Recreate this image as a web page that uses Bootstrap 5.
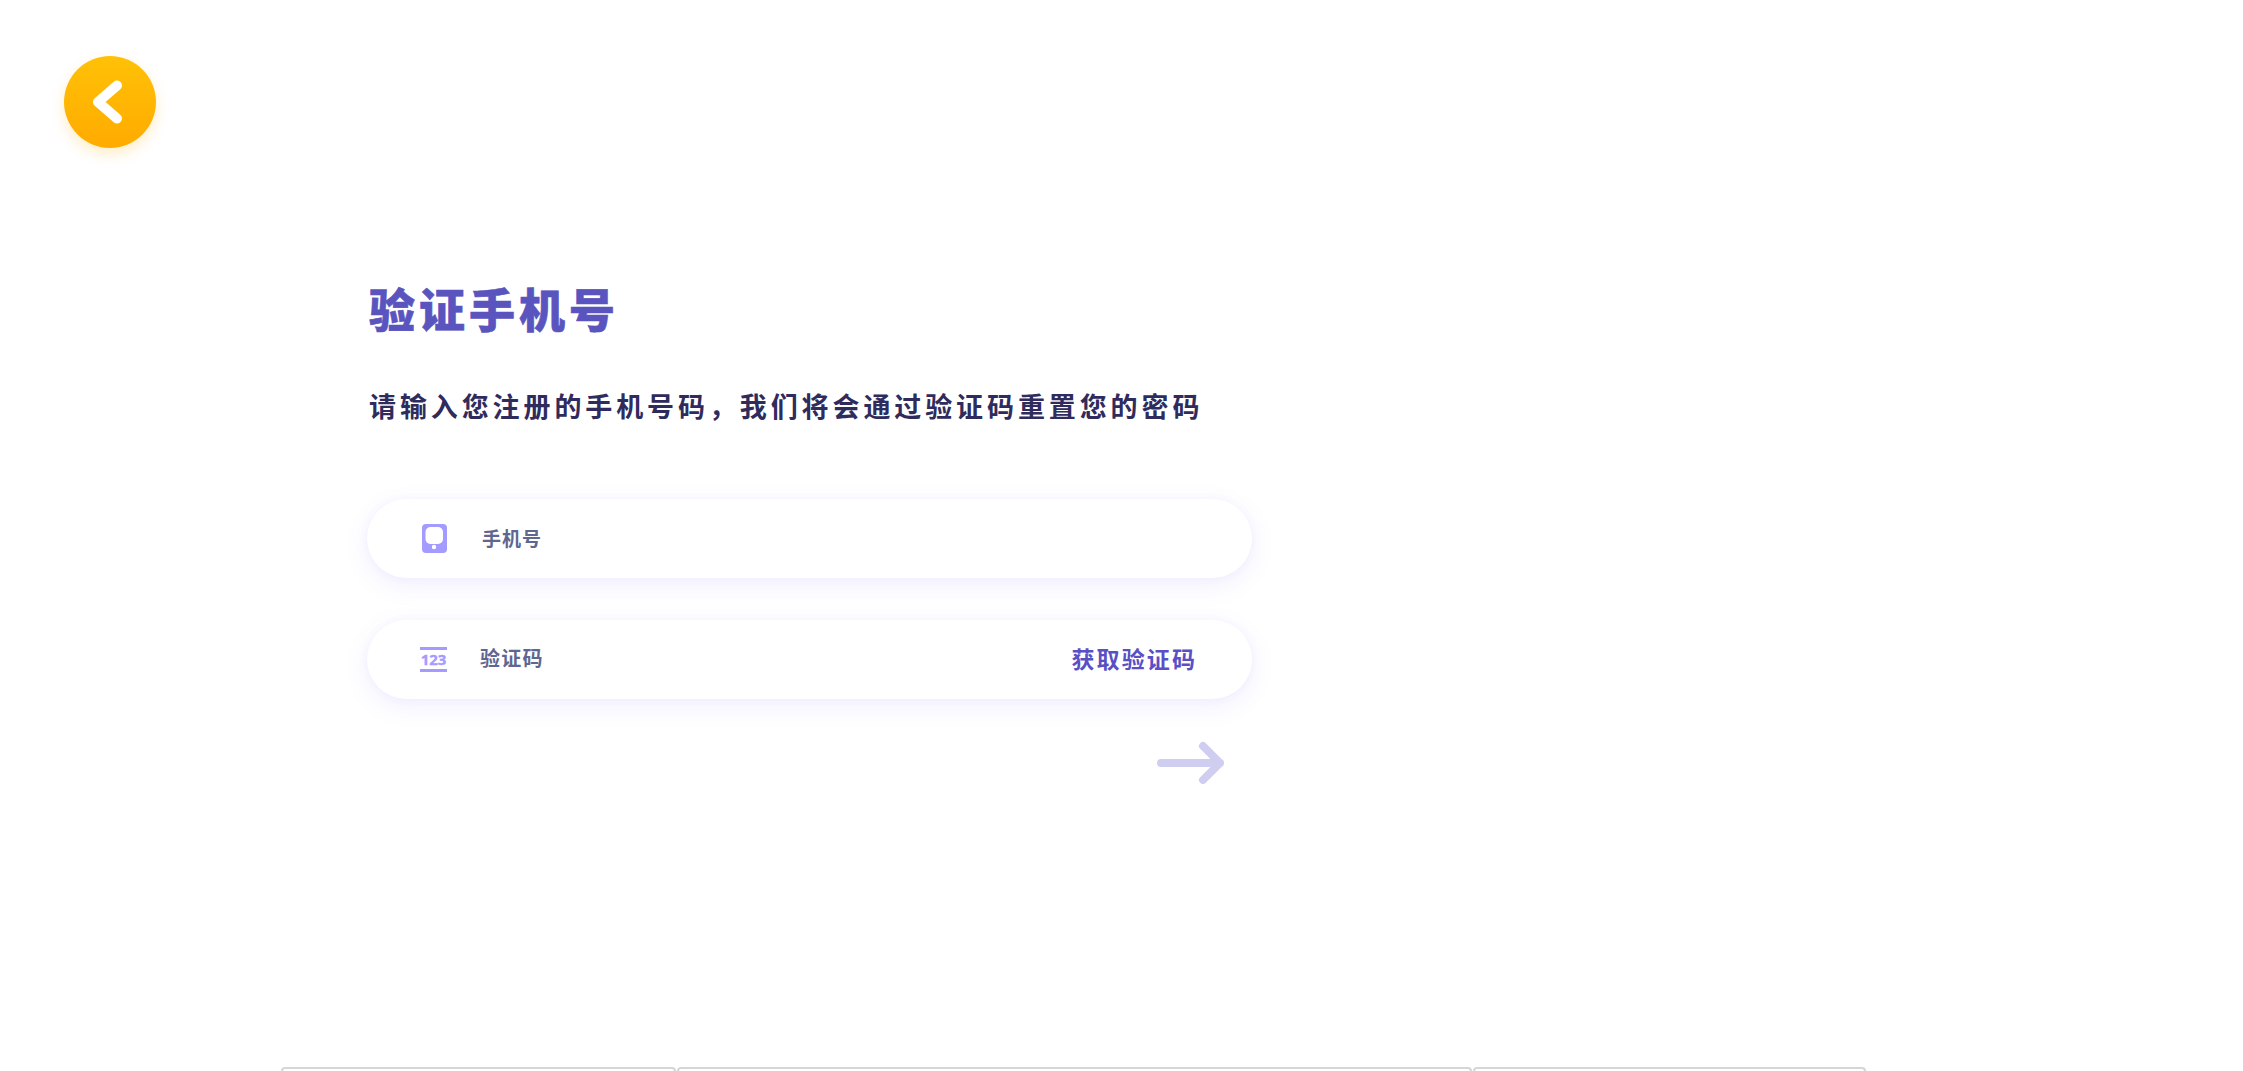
<!DOCTYPE html>
<html lang="zh">
<head>
<meta charset="utf-8">
<title>验证手机号</title>
<link href="https://cdn.jsdelivr.net/npm/bootstrap@5.3.0/dist/css/bootstrap.min.css" rel="stylesheet">
<style>
html,body{height:100%;overflow:hidden;background:#fff}
body{font-family:"Noto Sans CJK SC",sans-serif}
.vp-page{height:1071px;display:flex;flex-direction:column;padding:56px 0 0 64px}
.vp-back{width:92px;height:92px;border-radius:50%;border:0;padding:0;background:linear-gradient(180deg,#ffc107,#ffab00);box-shadow:0 6px 14px rgba(255,171,0,.22)}
.vp-main{width:885px;margin:127px 0 0 303px;flex:1 1 auto}
.vp-title{font-size:46px;font-weight:900;line-height:64px;color:#5a54bf;margin:0;padding-left:2px;letter-spacing:4px;-webkit-text-stroke:.6px #5a54bf}
.vp-sub{font-size:27px;font-weight:700;color:#2f2c5d;line-height:40px;margin:47px 0 0;padding-left:2px;letter-spacing:3.9px;white-space:nowrap}
.vp-field{height:78.500px;border-radius:40px;background:#fff;box-shadow:0 7px 24px rgba(108,99,255,.10),0 0 8px rgba(108,99,255,.05);padding:0 55px 0 52px}
.vp-field1{margin-top:73px}
.vp-field2{margin-top:42.500px}
.vp-icon{width:30px;flex:0 0 30px;display:block}
.vp-label{font-size:19px;font-weight:700;color:#5f6690;letter-spacing:1px;line-height:1;padding-bottom:2px}
.vp-label1{margin-left:33px}
.vp-label2{margin-left:31px;font-size:20px;letter-spacing:1.300px}
.vp-code{font-size:23px;font-weight:700;color:#5a4fc4;letter-spacing:2.100px;text-decoration:none;line-height:1;padding-bottom:2px}
.vp-next{margin:42px 28px 0 0;border:0;background:none;padding:0}
.vp-tabs{height:4px;margin-left:217px;display:flex;gap:1px}
.vp-tab{height:4px;border:2px solid #d6d6d6;border-bottom:0;border-radius:4px 4px 0 0;background:#fff}
.vp-tab-a{width:395px}
.vp-tab-b{width:795px}
.vp-tab-c{width:393px}
.vp-digits{stroke:#a39bff;stroke-width:.35px}
</style>
</head>
<body>
<div class="vp-page">
  <div>
    <button class="vp-back d-flex align-items-center justify-content-center" type="button" aria-label="返回">
      <svg width="34" height="48" viewBox="0 0 34 48"><path d="M24 7.500 5 24l19 16.500" fill="none" stroke="#fff" stroke-width="10" stroke-linecap="round" stroke-linejoin="round"/></svg>
    </button>
  </div>
  <div class="vp-main">
    <h1 class="vp-title">验证手机号</h1>
    <p class="vp-sub">请输入您注册的手机号码，我们将会通过验证码重置您的密码</p>
    <div class="vp-field vp-field1 d-flex align-items-center">
      <svg class="vp-icon" width="30" height="29" viewBox="0 0 30 29"><rect x="3" y="0" width="25" height="29" rx="4" fill="#a39bff"/><rect x="6.500" y="3" width="17.500" height="17" rx="5" fill="#fff"/><circle cx="15" cy="23" r="2.200" fill="#fff"/></svg>
      <span class="vp-label vp-label1">手机号</span>
    </div>
    <div class="vp-field vp-field2 d-flex align-items-center">
      <svg class="vp-icon" width="30" height="25" viewBox="0 0 30 25"><rect x="1" y="0" width="27" height="3" fill="#a39bff"/><rect x="1" y="22" width="27" height="3" fill="#a39bff"/><text class="vp-digits" x="14.500" y="17.500" text-anchor="middle" font-family="Open Sans,sans-serif" font-size="15" font-weight="700" fill="#a39bff">123</text></svg>
      <span class="vp-label vp-label2">验证码</span>
      <a class="vp-code ms-auto" href="#">获取验证码</a>
    </div>
    <div class="d-flex justify-content-end">
      <button class="vp-next" type="button" aria-label="下一步">
        <svg class="d-block" width="68" height="44" viewBox="0 0 68 44"><path d="M5 22h59M47 5l17 17-17 17" fill="none" stroke="#d0cef0" stroke-width="8" stroke-linecap="round" stroke-linejoin="round"/></svg>
      </button>
    </div>
  </div>
  <div class="vp-tabs">
    <div class="vp-tab vp-tab-a"></div>
    <div class="vp-tab vp-tab-b"></div>
    <div class="vp-tab vp-tab-c"></div>
  </div>
</div>
<script src="https://cdn.jsdelivr.net/npm/bootstrap@5.3.0/dist/js/bootstrap.bundle.min.js"></script>
</body>
</html>
